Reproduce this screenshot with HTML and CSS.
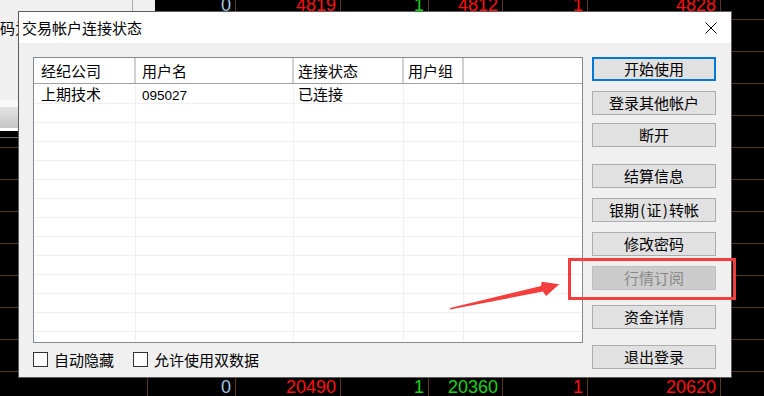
FILE: index.html
```html
<!DOCTYPE html>
<html>
  <head>
    <title>交易帐户连接状态</title>
    <link rel="stylesheet" href="styles.css">
  </head>

  <body>
    <div class="desk">
      <!-- 行情表格(背景) -->
      <div class="quotes">
        <div class="q-row q-top">
          <div class="q-cell w1"></div>
          <div class="q-cell w2 c-blue">0</div>
          <div class="q-cell w3 c-red">4819</div>
          <div class="q-cell w4 c-green">1</div>
          <div class="q-cell w5 c-red">4812</div>
          <div class="q-cell w6 c-red">1</div>
          <div class="q-cell w7 c-red">4828</div>
          <div class="q-cell w8"></div>
        </div>
        <div class="q-row"></div>
        <div class="q-row"></div>
        <div class="q-row"></div>
        <div class="q-row"></div>
        <div class="q-row"></div>
        <div class="q-row"></div>
        <div class="q-row"></div>
        <div class="q-row"></div>
        <div class="q-row"></div>
        <div class="q-row"></div>
        <div class="q-row"></div>
        <div class="q-row">
          <div class="q-cell w1"></div>
          <div class="q-cell w2 c-blue">0</div>
          <div class="q-cell w3 c-red">20490</div>
          <div class="q-cell w4 c-green">1</div>
          <div class="q-cell w5 c-green">20360</div>
          <div class="q-cell w6 c-red">1</div>
          <div class="q-cell w7 c-red">20620</div>
          <div class="q-cell w8"></div>
        </div>
      </div>

      <!-- 后面的窗口 -->
      <div class="back-win">
        <div class="back-body">
          <div class="back-main">
            <div class="back-label">码为</div>
            <div class="back-tab"></div>
          </div>
          <div class="back-side"></div>
        </div>
        <div class="back-rule"></div>
      </div>

      <!-- 对话框 -->
      <div class="dialog">
        <div class="titlebar">
          <div class="title">交易帐户连接状态</div>
          <svg class="close" width="12" height="12" viewBox="0 0 12 12">
            <path d="M0.5 0.5 L11.5 11.5 M11.5 0.5 L0.5 11.5" stroke="#000" stroke-width="1" fill="none"/>
          </svg>
        </div>

        <div class="dlg-body">
          <div class="main-col">
            <div class="list">
              <div class="list-head">
                <div class="h-cell col-1">经纪公司</div>
                <div class="h-cell col-2">用户名</div>
                <div class="h-cell col-3">连接状态</div>
                <div class="h-cell col-4">用户组</div>
                <div class="h-cell col-5"></div>
              </div>
              <div class="list-body">
                <div class="list-row">
                  <div class="cell col-1">上期技术</div>
                  <div class="cell col-2"><span class="num">095027</span></div>
                  <div class="cell col-3">已连接</div>
                  <div class="cell col-4"></div>
                  <div class="cell col-5"></div>
                </div>
                <div class="list-row"><div class="cell col-1"></div><div class="cell col-2"></div><div class="cell col-3"></div><div class="cell col-4"></div><div class="cell col-5"></div></div>
                <div class="list-row"><div class="cell col-1"></div><div class="cell col-2"></div><div class="cell col-3"></div><div class="cell col-4"></div><div class="cell col-5"></div></div>
                <div class="list-row"><div class="cell col-1"></div><div class="cell col-2"></div><div class="cell col-3"></div><div class="cell col-4"></div><div class="cell col-5"></div></div>
                <div class="list-row"><div class="cell col-1"></div><div class="cell col-2"></div><div class="cell col-3"></div><div class="cell col-4"></div><div class="cell col-5"></div></div>
                <div class="list-row"><div class="cell col-1"></div><div class="cell col-2"></div><div class="cell col-3"></div><div class="cell col-4"></div><div class="cell col-5"></div></div>
                <div class="list-row"><div class="cell col-1"></div><div class="cell col-2"></div><div class="cell col-3"></div><div class="cell col-4"></div><div class="cell col-5"></div></div>
                <div class="list-row"><div class="cell col-1"></div><div class="cell col-2"></div><div class="cell col-3"></div><div class="cell col-4"></div><div class="cell col-5"></div></div>
                <div class="list-row"><div class="cell col-1"></div><div class="cell col-2"></div><div class="cell col-3"></div><div class="cell col-4"></div><div class="cell col-5"></div></div>
                <div class="list-row"><div class="cell col-1"></div><div class="cell col-2"></div><div class="cell col-3"></div><div class="cell col-4"></div><div class="cell col-5"></div></div>
                <div class="list-row"><div class="cell col-1"></div><div class="cell col-2"></div><div class="cell col-3"></div><div class="cell col-4"></div><div class="cell col-5"></div></div>
                <div class="list-row"><div class="cell col-1"></div><div class="cell col-2"></div><div class="cell col-3"></div><div class="cell col-4"></div><div class="cell col-5"></div></div>
                <div class="list-row"><div class="cell col-1"></div><div class="cell col-2"></div><div class="cell col-3"></div><div class="cell col-4"></div><div class="cell col-5"></div></div>
                <div class="list-row"><div class="cell col-1"></div><div class="cell col-2"></div><div class="cell col-3"></div><div class="cell col-4"></div><div class="cell col-5"></div></div>
              </div>
            </div>

            <div class="options">
              <label class="opt"><span class="box"></span>自动隐藏</label>
              <label class="opt"><span class="box"></span>允许使用双数据</label>
            </div>
          </div>

          <div class="side-col">
            <button class="btn btn-focus">开始使用</button>
            <button class="btn">登录其他帐户</button>
            <button class="btn gap-8">断开</button>
            <button class="btn gap-17">结算信息</button>
            <button class="btn">银期<span class="paren">(</span>证<span class="paren">)</span>转帐</button>
            <button class="btn">修改密码</button>
            <button class="btn btn-disabled">行情订阅</button>
            <button class="btn gap-15">资金详情</button>
            <button class="btn gap-16">退出登录</button>
          </div>
        </div>
      </div>

      <!-- 红色标注 -->
      <svg class="callout" width="764" height="396" viewBox="0 0 764 396">
        <rect x="569.5" y="259.5" width="165" height="39" fill="none" stroke="#f43d3d" stroke-width="3"/>
        <polygon points="450,308 541,286 541.7,281.7 559.3,284.3 546,296 543,291.5 450,309.5" fill="#f43d3d"/>
      </svg>
    </div>
  </body>
</html>
```

FILE: styles.css
```css
* {
  box-sizing: border-box;
}

body {
  margin: 0;
  width: 764px;
  height: 396px;
  overflow: hidden;
  background-color: #000;
  font-family: "Noto Sans CJK SC", "Liberation Sans", sans-serif;
  font-size: 15px;
  color: #000;
}

.desk {
  position: relative;
  width: 764px;
  height: 396px;
  overflow: hidden;
}

/* 行情表格 */
.quotes {
  position: absolute;
  left: 0;
  top: -12px;
  width: 764px;
}

.q-row {
  display: flex;
  height: 32px;
  border-bottom: 1px solid #5a3620;
}

.q-cell {
  flex: none;
  height: 31px;
  border-right: 1px solid #5a3620;
  padding: 5px 4px 0 0;
  text-align: right;
  font-family: "Liberation Sans", sans-serif;
  font-size: 18px;
  line-height: 20px;
}

.q-top .q-cell {
  padding-top: 7px;
}

.w1 { width: 148px; }
.w2 { width: 88px; }
.w3 { width: 105px; }
.w4 { width: 88px; }
.w5 { width: 74px; }
.w6 { width: 85px; }
.w7 { width: 133px; }
.w8 { width: 43px; border-right: none; }

.c-blue { color: #a6c5e3; }
.c-red { color: #ff1010; }
.c-green { color: #18d418; }

/* 后面的窗口 */
.back-win {
  position: absolute;
  left: 0;
  top: 0;
  width: 155px;
}

.back-body {
  display: flex;
  height: 131px;
  background-color: #f0f0f0;
}

.back-main {
  width: 132px;
  display: flex;
  flex-direction: column;
  justify-content: space-between;
}

.back-label {
  padding-top: 19px;
  line-height: 17px;
  white-space: nowrap;
}

.back-tab {
  height: 31px;
  border-top: 7px solid #fafafa;
  border-bottom: 3px solid #fff;
  background: linear-gradient(#e4e4e4, #c6c6c6);
}

.back-side {
  flex: 1;
  border-left: 1px solid #a9a9a9;
}

.back-rule {
  margin-top: 6px;
  height: 1px;
  background-color: #707070;
}

/* 对话框 */
.dialog {
  position: absolute;
  left: 18px;
  top: 11px;
  width: 714px;
  height: 367px;
  border: 1px solid #5c5c5c;
  background-color: #f0f0f0;
  display: flex;
  flex-direction: column;
}

.titlebar {
  height: 31px;
  flex: none;
  background-color: #fff;
  display: flex;
  align-items: center;
  justify-content: space-between;
  padding: 0 14px 0 3px;
}

.title {
  line-height: 18px;
}

.close {
  display: block;
}

.dlg-body {
  display: flex;
  gap: 9px;
  padding: 14px 14px 0 14px;
}

.main-col {
  width: 550px;
}

/* 列表 */
.list {
  height: 286px;
  border: 1px solid #828790;
  background-color: #fff;
  overflow: hidden;
}

.list-head {
  display: flex;
  height: 26px;
  border-bottom: 1px solid #a0a0a0;
}

.h-cell {
  flex: none;
  height: 25px;
  border-right: 2px solid #d0d0d0;
  padding-left: 4px;
  line-height: 25px;
  white-space: nowrap;
}

.list-body {
  padding-top: 1px;
}

.list-row {
  display: flex;
  height: 19px;
  border-bottom: 1px solid #f0f0f0;
}

.cell {
  flex: none;
  height: 18px;
  border-right: 1px solid #f0f0f0;
  padding-left: 4px;
  line-height: 18px;
  white-space: nowrap;
  overflow: hidden;
}

.col-1 { width: 102px; padding-left: 7px; }
.col-2 { width: 158px; padding-left: 6px; }
.col-3 { width: 110px; }
.col-4 { width: 60px; }
.col-5 { width: 118px; border-right: none; }

.num {
  font-family: "Liberation Sans", sans-serif;
  font-size: 13.5px;
}

/* 复选框 */
.options {
  display: flex;
  align-items: center;
  height: 15px;
  margin-top: 9px;
}

.opt {
  display: flex;
  align-items: center;
  gap: 6px;
  margin-right: 19px;
  line-height: 15px;
  white-space: nowrap;
}

.box {
  width: 15px;
  height: 15px;
  border: 1px solid #333;
  background-color: #fff;
}

/* 按钮 */
.side-col {
  width: 124px;
  display: flex;
  flex-direction: column;
}

.btn {
  height: 24px;
  margin-top: 10px;
  padding: 0;
  border: 1px solid #adadad;
  background-color: #e1e1e1;
  font-family: "Noto Sans CJK SC", sans-serif;
  font-size: 15px;
  line-height: 20px;
  color: #000;
  white-space: nowrap;
}

.btn:first-child {
  margin-top: 0;
}

.paren {
  display: inline-block;
  width: 7.5px;
  text-align: center;
}

.btn-focus {
  border: 2px solid #0078d7;
}

.btn-disabled {
  background-color: #cccccc;
  border-color: #bfbfbf;
  color: #888;
}

.gap-8 { margin-top: 8px; }
.gap-15 { margin-top: 15px; }
.gap-16 { margin-top: 16px; }
.gap-17 { margin-top: 17px; }

/* 标注 */
.callout {
  position: absolute;
  left: 0;
  top: 0;
  pointer-events: none;
}
```
